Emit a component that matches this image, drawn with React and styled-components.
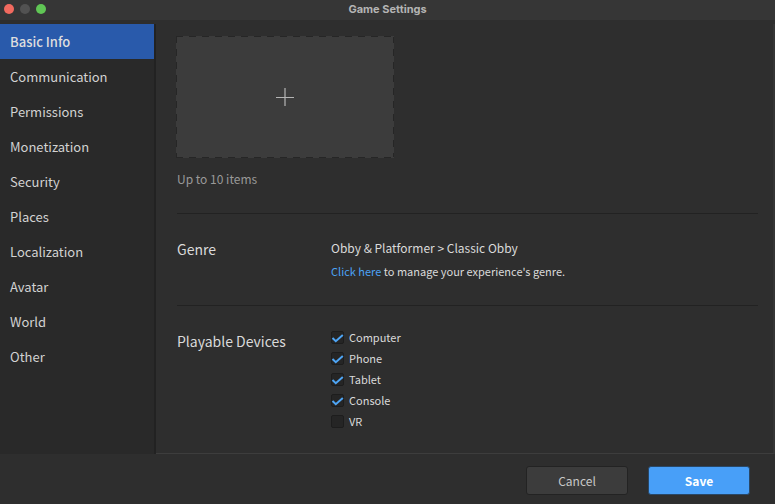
import React, { useState } from "react";
import styled, { createGlobalStyle, css } from "styled-components";

const GlobalStyle = createGlobalStyle`
  *, *::before, *::after { box-sizing: border-box; }
  body {
    margin: 0;
    background: #2e2e2e;
    color: #dadada;
    font-family: "Noto Sans CJK SC", "Noto Sans", sans-serif;
    font-size: 14px;
    line-height: 20px;
  }
  button, input { font: inherit; color: inherit; margin: 0; }
`;

const Window = styled.div`
  display: flex;
  flex-direction: column;
  min-height: 100vh;
`;

const TitleBar = styled.header`
  display: grid;
  grid-template-columns: 1fr auto 1fr;
  align-items: center;
  height: 20px;
  padding: 0 4px 2px;
  background: #363636;
`;

const WindowControls = styled.div`
  display: flex;
  gap: 6px;
`;

const WindowDot = styled.button`
  width: 10px;
  height: 10px;
  padding: 0;
  border: 0;
  border-radius: 50%;
  background: ${(p) => p.$color};
`;

const Title = styled.h1`
  margin: 0;
  font: 700 11px/16px Inter, sans-serif;
  color: #b4b4b4;
`;

const Body = styled.div`
  display: flex;
  flex: 1;
  padding-top: 4px;
`;

const Sidebar = styled.nav`
  width: 156px;
  flex-shrink: 0;
  background: #292929;
  border-right: 2px solid #222222;
`;

const NavItem = styled.button`
  display: block;
  width: 100%;
  height: 35px;
  padding: 0 10px;
  border: 0;
  text-align: left;
  font-size: 13px;
  background: transparent;
  color: #d2d2d2;
  ${(p) =>
    p.$active &&
    css`
      background: #295aab;
      color: #dedede;
      font-weight: 500;
    `}
`;

const Content = styled.main`
  flex: 1;
  min-width: 0;
  padding: 12px 15px 0 20px;
  border-right: 2px solid #353535;
  border-bottom: 1px solid #3d3d3d;
`;

const dashX = "repeating-linear-gradient(90deg, #262626 0 7px, #3c3c3c 7px 13px)";
const dashY = "repeating-linear-gradient(180deg, #262626 0 7px, #3c3c3c 7px 13px)";

const UploadTile = styled.button`
  display: grid;
  place-items: center;
  width: 218px;
  height: 122px;
  padding: 0;
  border: 0;
  background:
    ${dashX} top / 100% 1px no-repeat,
    ${dashX} bottom / 100% 1px no-repeat,
    ${dashY} left / 1px 100% no-repeat,
    ${dashY} right / 1px 100% no-repeat,
    #3c3c3c;
`;

const Hint = styled.p`
  margin: 11px 0 0 1px;
  font-size: 12px;
  color: #999999;
`;

const Section = styled.section`
  display: grid;
  grid-template-columns: 154px 1fr;
  align-items: start;
  margin-left: 1px;
  padding: ${(p) => (p.$last ? "21px 0" : "24px 0")};
  border-top: 1px solid #222222;
`;

const Sections = styled.div`
  padding-top: 24px;
`;

const SectionTitle = styled.h2`
  margin: 0;
  padding-top: ${(p) => (p.$lowered ? "4px" : "1px")};
  font-size: 14px;
  font-weight: 400;
`;

const GenreInfo = styled.div`
  display: grid;
  gap: 3px;
`;

const GenreName = styled.p`
  margin: 0;
  font-size: 12px;
`;

const GenreNote = styled.p`
  margin: 0;
  font-size: 11px;
`;

const Link = styled.a`
  color: #4ca2f5;
  text-decoration: none;
`;

const Devices = styled.div`
  display: grid;
`;

const Device = styled.label`
  display: flex;
  align-items: center;
  gap: 5px;
  height: 21px;
  font-size: 11px;
  line-height: 19px;
`;

const CheckWrap = styled.span`
  display: grid;
  width: 13px;
  height: 13px;
  > * { grid-area: 1 / 1; }
`;

const Checkbox = styled.input`
  appearance: none;
  width: 13px;
  height: 13px;
  border: 1px solid #1d1d1d;
  border-radius: 2px;
  background: #252525;
  &:not(:checked) + svg { display: none; }
`;

const Footer = styled.footer`
  display: flex;
  justify-content: flex-end;
  gap: 20px;
  padding: 12px 25px 9px;
`;

const Action = styled.button`
  width: 102px;
  height: 29px;
  padding: 0;
  border: 1px solid ${(p) => (p.$primary ? "#294766" : "#232323")};
  border-radius: 3px;
  background: ${(p) => (p.$primary ? "#489ff8" : "#3c3c3c")};
  color: ${(p) => (p.$primary ? "#ffffff" : "#c8c8c8")};
  font-size: 12px;
  font-weight: ${(p) => (p.$primary ? 700 : 400)};
`;

const pages = [
  "Basic Info", "Communication", "Permissions", "Monetization", "Security",
  "Places", "Localization", "Avatar", "World", "Other",
];

const devices = [
  ["Computer", true], ["Phone", true], ["Tablet", true], ["Console", true], ["VR", false],
];

export default function App() {
  const [page, setPage] = useState("Basic Info");
  return (
    <>
      <GlobalStyle />
      <Window>
        <TitleBar>
          <WindowControls>
            <WindowDot $color="#f26a5f" aria-label="Close" />
            <WindowDot $color="#525252" aria-label="Minimize" />
            <WindowDot $color="#60c655" aria-label="Zoom" />
          </WindowControls>
          <Title>Game Settings</Title>
        </TitleBar>
        <Body>
          <Sidebar>
            {pages.map((name) => (
              <NavItem key={name} $active={name === page} onClick={() => setPage(name)}>
                {name}
              </NavItem>
            ))}
          </Sidebar>
          <Content>
            <UploadTile aria-label="Add item">
              <svg width="18" height="18" viewBox="0 0 18 18" stroke="#b5b5b5" fill="none">
                <path d="M0 9.5h18M9 0v18" strokeWidth="1.2" />
              </svg>
            </UploadTile>
            <Hint>Up to 10 items</Hint>
            <Sections>
              <Section>
                <SectionTitle>Genre</SectionTitle>
                <GenreInfo>
                  <GenreName>Obby &amp; Platformer &gt; Classic Obby</GenreName>
                  <GenreNote>
                    <Link href="#genre">Click here</Link> to manage your experience's genre.
                  </GenreNote>
                </GenreInfo>
              </Section>
              <Section $last>
                <SectionTitle $lowered>Playable Devices</SectionTitle>
                <Devices>
                  {devices.map(([name, on]) => (
                    <Device key={name}>
                      <CheckWrap>
                        <Checkbox type="checkbox" defaultChecked={on} />
                        <svg width="13" height="13" viewBox="0 0 13 13" fill="none" stroke="#4ea5f5" strokeWidth="2">
                          <path d="M1.5 7 4.8 10.2 11.8 4" />
                        </svg>
                      </CheckWrap>
                      {name}
                    </Device>
                  ))}
                </Devices>
              </Section>
            </Sections>
          </Content>
        </Body>
        <Footer>
          <Action>Cancel</Action>
          <Action $primary>Save</Action>
        </Footer>
      </Window>
    </>
  );
}
